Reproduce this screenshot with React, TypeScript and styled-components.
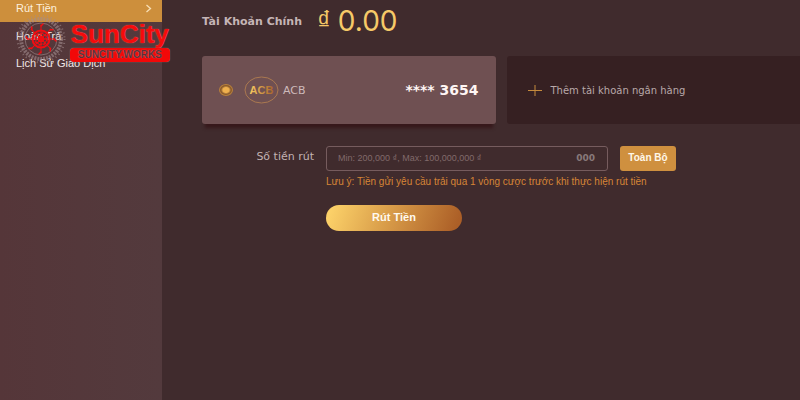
import React from "react";
import styled, { createGlobalStyle } from "styled-components";

const GlobalStyle = createGlobalStyle`
  * { box-sizing: border-box; }
  body {
    margin: 0;
    background: #402b2d;
    font-family: "Liberation Sans", Arial, sans-serif;
  }
  button, input { font-family: inherit; }
`;

const Page = styled.div`
  position: relative;
  display: flex;
  min-height: 100vh;
`;

const Sidebar = styled.nav`
  flex: 0 0 162px;
  background: linear-gradient(90deg, #553639 0%, #533a3d 100%);
`;

const MenuLink = styled.a<{ $active?: boolean }>`
  display: flex;
  align-items: center;
  justify-content: space-between;
  height: ${(p) => (p.$active ? "22px" : "27px")};
  padding: ${(p) => (p.$active ? "0 10px 6px 16px" : "0 10px 0 16px")};
  background: ${(p) => (p.$active ? "#cd8f3c" : "transparent")};
  color: ${(p) => (p.$active ? "#fdf0dc" : "#f1e8e8")};
  font-size: 11px;
  line-height: 16px;
  text-decoration: none;
`;

const Brand = styled.div`
  position: absolute;
  top: 14px;
  left: 14px;
  display: flex;
  align-items: center;
  gap: 2px;
  pointer-events: none;
`;

const BrandText = styled.div`
  display: flex;
  flex-direction: column;
  align-items: center;
  padding-top: 4px;
`;

const BrandName = styled.span`
  color: #f60b0b;
  font-size: 26px;
  font-weight: 700;
  line-height: 28px;
  text-shadow: 0 0 1px #b08a8a, 0 0 1px #f60b0b;
`;

const BrandSite = styled.span`
  padding: 0 8px;
  border-radius: 4px;
  background: #f20808;
  box-shadow: 0 0 1px #b09a9a;
  color: #5b3034;
  font-size: 10px;
  font-weight: 700;
  line-height: 14px;
  text-shadow: 0 0 1px #e08c8c;
`;

const Main = styled.main`
  flex: 1;
  min-width: 0;
  padding-left: 40px;
`;

const Account = styled.header`
  display: flex;
  align-items: center;
  gap: 15px;
  height: 56px;
  padding-bottom: 14px;
`;

const AccountLabel = styled.span`
  color: #c5b5b6;
  font-family: "DejaVu Sans", sans-serif;
  font-size: 11px;
  font-weight: 700;
`;

const Balance = styled.span`
  display: flex;
  align-items: center;
  gap: 7px;
  color: #f6c968;
  font-family: Inter, sans-serif;
  font-size: 28px;
  line-height: 32px;
`;

const Currency = styled.span`
  font-family: "Liberation Sans", sans-serif;
  font-size: 27px;
`;

const Cards = styled.div`
  display: grid;
  grid-template-columns: minmax(0, 1fr) minmax(0, 1fr);
  gap: 11px;
`;

const BankCard = styled.label`
  display: flex;
  align-items: center;
  height: 68px;
  padding: 0 17px;
  border-radius: 3px;
  background: #6f5052;
  box-shadow: 0 7px 3px -3px #37181b;
`;

const Radio = styled.input`
  appearance: none;
  width: 14px;
  height: 12px;
  margin: 0 11px 0 0;
  border: 1px solid #b9803b;
  border-radius: 50%;
  background: radial-gradient(ellipse, #efb04e 0 3px, #8a5a2c 5px);
`;

const BankName = styled.span`
  flex: 1;
  margin-left: 4px;
  color: #cdbabb;
  font-family: "DejaVu Sans", sans-serif;
  font-size: 11px;
`;

const CardNumber = styled.span`
  color: #fff6f4;
  font-family: "DejaVu Sans", sans-serif;
  font-size: 14px;
  font-weight: 700;
`;

const AddCard = styled.button`
  display: flex;
  align-items: center;
  gap: 9px;
  height: 68px;
  padding: 0 21px;
  border: 0;
  border-radius: 3px 0 0 3px;
  background: #362022;
  color: #b9a9aa;
  font-family: "DejaVu Sans", sans-serif;
  font-size: 10px;
`;

const Form = styled.form`
  display: grid;
  grid-template-columns: 112px minmax(0, 282px) 56px;
  column-gap: 12px;
  align-items: center;
  padding-top: 22px;
`;

const FieldLabel = styled.label`
  color: #c2b2b3;
  font-family: "DejaVu Sans", sans-serif;
  font-size: 11px;
  text-align: right;
  padding-bottom: 4px;
`;

const Field = styled.div`
  display: flex;
  align-items: center;
  height: 25px;
  padding: 0 12px 2px 11px;
  border: 1px solid #765c5e;
  border-radius: 3px;
`;

const AmountInput = styled.input`
  flex: 1;
  min-width: 0;
  padding: 0;
  border: 0;
  outline: 0;
  background: transparent;
  color: #c2b2b3;
  font-size: 9px;
  &::placeholder { color: #806a6b; opacity: 1; }
`;

const Suffix = styled.span`
  color: #88797a;
  font-family: "DejaVu Sans", sans-serif;
  font-size: 9px;
  font-weight: 700;
`;

const AllButton = styled.button`
  height: 25px;
  padding: 0 0 2px;
  border: 0;
  border-radius: 3px;
  background: #cf903f;
  color: #fff7e8;
  font-size: 10px;
  font-weight: 700;
`;

const Note = styled.p`
  grid-column: 2 / -1;
  margin: 5px 0 0;
  color: #d68536;
  font-size: 10px;
  line-height: 12px;
  white-space: nowrap;
`;

const SubmitButton = styled.button`
  grid-column: 2;
  justify-self: start;
  width: 136px;
  height: 26px;
  margin-top: 17px;
  padding: 0 0 2px;
  border: 0;
  border-radius: 13px;
  background: linear-gradient(110deg, #fbd068 5%, #d59746 50%, #ac5f27 95%);
  color: #fff9ee;
  font-size: 11px;
  font-weight: 700;
`;

const spokes = [0, 45, 90, 135, 180, 225, 270, 315];

const Emblem = () => (
  <svg width="54" height="50" viewBox="-27 -25 54 50" fill="none" aria-hidden="true">
    <g stroke="#a38d8f" opacity="0.6">
      <circle r="20" strokeWidth="4" strokeDasharray="2 1" />
      <circle r="23.5" strokeWidth="2" strokeDasharray="1 3" />
      <circle r="16" strokeWidth="1" />
    </g>
    <g stroke="#f10d12" strokeLinecap="round">
      <circle r="8.5" strokeWidth="2" />
      <circle r="3" fill="#f10d12" />
      {spokes.map((angle) => (
        <g key={angle} transform={`rotate(${angle})`}>
          <path d="M0 0V-14" />
          <path d="M0 -13L2 -15M-1 -5L2 -6" strokeWidth="1.5" />
        </g>
      ))}
    </g>
  </svg>
);

const BankLogo = () => (
  <svg width="35" height="28" viewBox="0 0 35 28" aria-hidden="true">
    <defs>
      <linearGradient id="gold" x1="0" x2="1">
        <stop offset="0" stopColor="#f9cc61" />
        <stop offset="1" stopColor="#a9642b" />
      </linearGradient>
    </defs>
    <ellipse cx="17.5" cy="14" rx="16.5" ry="13" fill="none" stroke="#aa7850" />
    <text x="17.5" y="18" textAnchor="middle" fontSize="11" fontWeight="700" fill="url(#gold)">
      ACB
    </text>
  </svg>
);

export default function App() {
  return (
    <>
      <GlobalStyle />
      <Page>
        <Sidebar>
          <MenuLink href="#withdraw" $active>
            Rút Tiền
            <svg width="7" height="9" viewBox="0 0 7 9" fill="none" stroke="#f8dfb5" aria-hidden="true">
              <path d="M1.5 1L5.5 4.5L1.5 8" strokeWidth="1.3" />
            </svg>
          </MenuLink>
          <MenuLink href="#rebate">Hoàn Trả</MenuLink>
          <MenuLink href="#history">Lịch Sử Giao Dịch</MenuLink>
        </Sidebar>
        <Main>
          <Account>
            <AccountLabel>Tài Khoản Chính</AccountLabel>
            <Balance>
              <Currency>₫</Currency>0.00
            </Balance>
          </Account>
          <Cards>
            <BankCard>
              <Radio type="radio" name="bank" defaultChecked />
              <BankLogo />
              <BankName>ACB</BankName>
              <CardNumber>**** 3654</CardNumber>
            </BankCard>
            <AddCard type="button">
              <svg width="14" height="12" viewBox="0 0 14 12" stroke="#c58a3c" aria-hidden="true">
                <path d="M0 6.5H14M7 1V12" />
              </svg>
              Thêm tài khoản ngân hàng
            </AddCard>
          </Cards>
          <Form onSubmit={(e) => e.preventDefault()}>
            <FieldLabel htmlFor="amount">Số tiền rút</FieldLabel>
            <Field>
              <AmountInput id="amount" placeholder="Min: 200,000 ₫, Max: 100,000,000 ₫" />
              <Suffix>000</Suffix>
            </Field>
            <AllButton type="button">Toàn Bộ</AllButton>
            <Note>Lưu ý: Tiền gửi yêu cầu trải qua 1 vòng cược trước khi thực hiện rút tiền</Note>
            <SubmitButton type="submit">Rút Tiền</SubmitButton>
          </Form>
        </Main>
        <Brand>
          <Emblem />
          <BrandText>
            <BrandName>SunCity</BrandName>
            <BrandSite>SUNCITY.WORKS</BrandSite>
          </BrandText>
        </Brand>
      </Page>
    </>
  );
}
